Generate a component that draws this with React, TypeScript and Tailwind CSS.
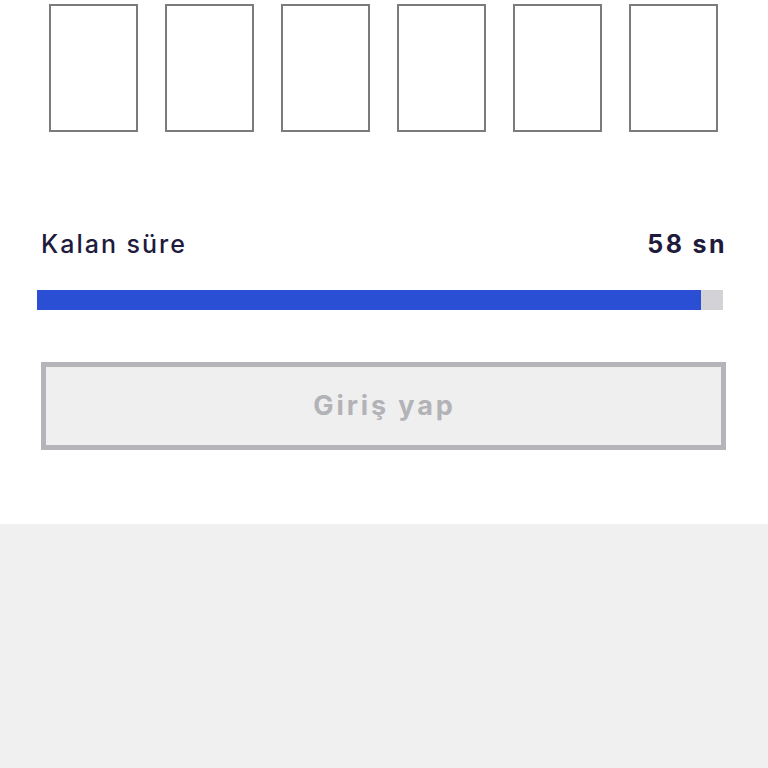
export default function App() {
  const boxes = [0, 1, 2, 3, 4, 5];
  const percent = (664 / 686) * 100;

  return (
    <div className="min-h-screen bg-[#f0f0f0] font-['Inter',sans-serif]">
      <div className="h-[524px] bg-white pt-[4px]">
        <div className="flex justify-center gap-[27px] pr-px">
          {boxes.map((b) => (
            <div key={b} className="h-[128px] w-[89px] border-2 border-[#7b7b7b] bg-white" />
          ))}
        </div>

        <div className="mt-[97px] flex items-center justify-between pl-[41px] pr-[41px] text-[25px] leading-[30px] text-[#1e1b3d]">
          <span className="font-medium tracking-[2px]">Kalan süre</span>
          <span className="font-bold tracking-[2.4px]">58 sn</span>
        </div>

        <div className="ml-[37px] mr-[45px] mt-[31px] h-[20px] bg-[#d2d2d7]">
          <div className="h-full bg-[#2a4fd5]" style={{ width: `${percent}%` }} />
        </div>

        <button
          type="button"
          disabled
          className="ml-[41px] mt-[52px] flex h-[88px] w-[685px] items-center justify-center border-[5px] border-[#b4b4b9] bg-[#efefef] pl-[2px] text-[27px] font-bold tracking-[2.9px] text-[#b2b2b7]"
        >
          Giriş yap
        </button>
      </div>
    </div>
  );
}
